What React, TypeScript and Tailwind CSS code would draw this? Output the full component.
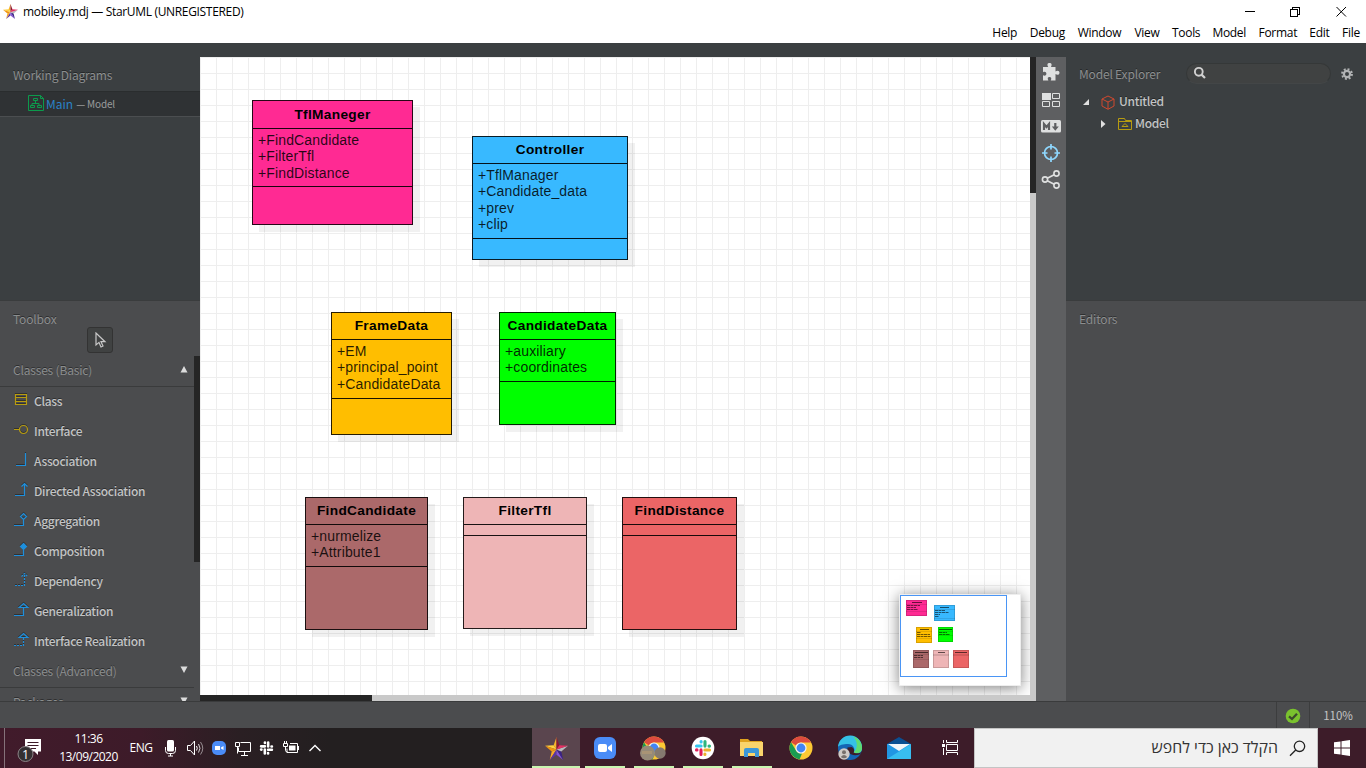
import React from "react";

const SEGOE = "font-['Open_Sans','Noto_Sans',sans-serif]";
const SOURCE = "font-['Noto_Sans_CJK_JP','Noto_Sans',sans-serif]";

function Star({ size }: { size: number }) {
  return (
    <svg width={size} height={size} viewBox="0 0 24 24" className="block shrink-0">
      <path d="M12 0 9 8.500 12 13Z" fill="#f6b52c" />
      <path d="M12 0 15 8.500 12 13Z" fill="#8c1633" />
      <path d="M0 9 9 8.500 12 13Z" fill="#ffd23f" />
      <path d="M0 9 7 15 12 13Z" fill="#f0930f" />
      <path d="M5 24 7 15 12 13Z" fill="#f7a928" />
      <path d="M5 24 12 18.500 12 13Z" fill="#5b35a5" />
      <path d="M19 24 12 18.500 12 13Z" fill="#8453d6" />
      <path d="M19 24 17 15 12 13Z" fill="#3b2385" />
      <path d="M24 9 17 15 12 13Z" fill="#b9b9bd" />
      <path d="M24 9 15 8.500 12 13Z" fill="#e52f62" />
    </svg>
  );
}

const menus = [
  { t: "Help", c: "w-[25px]" },
  { t: "Debug", c: "w-[35px]" },
  { t: "Window", c: "w-[44px]" },
  { t: "View", c: "w-[26px]" },
  { t: "Tools", c: "w-[27px]" },
  { t: "Model", c: "w-[34px]" },
  { t: "Format", c: "w-[38px]" },
  { t: "Edit", c: "w-[20px]" },
  { t: "File", c: "w-[18px]" },
];

function TitleBar() {
  return (
    <header className={`h-[43px] shrink-0 bg-white text-[12px] text-black ${SEGOE}`}>
      <div className="flex h-[23px] items-center pl-[3px]">
        <Star size={15} />
        <span className="ml-[5px] whitespace-nowrap leading-[23px] tracking-[-0.330px]">mobiley.mdj — StarUML (UNREGISTERED)</span>
        <svg className="ml-auto mr-[16px] block" width="105" height="20" viewBox="0 0 105 20" fill="none" stroke="#000" shapeRendering="crispEdges">
          <path d="M0 9.500H10" />
          <path d="M45.500 7.500h7v7h-7zM47.500 7.500v-2h7v7h-2" />
          <path d="M91.500 5 101 14.500M101 5l-9.500 9.500" shapeRendering="auto" />
        </svg>
      </div>
      <nav className="flex h-[20px] justify-end gap-[12.600px] pr-[6px]">
        {menus.map((m) => (
          <span key={m.t} className={`flex justify-center whitespace-nowrap leading-[20px] tracking-[-0.300px] ${m.c}`}>{m.t}</span>
        ))}
      </nav>
    </header>
  );
}

const YELLOW = "#b89c10";
const BLUE = "#1e8fdc";
const tools: { name: string; color: string; icon: React.ReactNode }[] = [
  { name: "Class", color: YELLOW, icon: <path d="M1.500 2.500h11v10h-11zM1.500 5.500h11M1.500 9.500h11" /> },
  { name: "Interface", color: YELLOW, icon: <path d="M0 7.500h5M13.500 7.500a4 4 0 1 1-8 0a4 4 0 1 1 8 0" /> },
  { name: "Association", color: BLUE, icon: <path d="M2 13.500h9.500V1" /> },
  { name: "Directed Association", color: BLUE, icon: <path d="M1 13.500h9.500V1.500M7.500 4.500l3-3 3 3" /> },
  { name: "Aggregation", color: BLUE, icon: <path d="M0 13.500h9.500V7.500M9.500 1.500l3 3-3 3-3-3z" /> },
  { name: "Composition", color: BLUE, icon: <><path d="M0 13.500h9.500V7.500" /><path d="M9.500 1.500l3 3-3 3-3-3z" fill={BLUE} /></> },
  { name: "Dependency", color: BLUE, icon: <><path d="M1 13.500h9.500V2" strokeDasharray="2 1" /><path d="M7.500 4.500l3-3 3 3" strokeDasharray="2 1" /></> },
  { name: "Generalization", color: BLUE, icon: <path d="M0 13.500h9.500V6M9.500 1.500l4.300 4h-8.600z" /> },
  { name: "Interface Realization", color: BLUE, icon: <><path d="M0 13.500h9.500V6" strokeDasharray="2 1" /><path d="M9.500 1.500l4.300 4h-8.600z" /></> },
];

const HEAD = "text-[12px] tracking-[-0.180px] text-[#8c8e8f] [text-shadow:0_-1px_0_rgba(0,0,0,0.4)] whitespace-nowrap";
const ITEM = "text-[12px] tracking-[-0.300px] font-medium text-[#c3c4c5] [text-shadow:0_-1px_0_rgba(0,0,0,0.4)] whitespace-nowrap";

function Group({ title, open }: { title: string; open?: boolean }) {
  return (
    <div className="flex h-[31px] shrink-0 border-b border-[#3a3b3c] pl-[13px] pr-[6px]">
      <span className={`leading-[28px] ${HEAD}`}>{title}</span>
      <svg className="mt-[9px] ml-auto block" width="8" height="8" viewBox="0 0 8 8" fill="#dcdcdc">
        <path d={open ? "M4 1 7.500 7.500H.5z" : "M4 7 7.500 .5H.5z"} />
      </svg>
    </div>
  );
}

function LeftSidebar() {
  return (
    <aside className={`flex w-[200px] shrink-0 flex-col ${SOURCE}`}>
      <section className="h-[243px] shrink-0 bg-[#3b3f41]">
        <h2 className={`h-[34px] pl-[13px] leading-[35px] ${HEAD}`}>Working Diagrams</h2>
        <div className="flex h-[26px] items-center border-y border-t-[#2a2d2e] border-b-[#4b4e50] bg-[#2f3234] pl-[28px]">
          <svg width="16" height="16" viewBox="0 0 16 16" fill="none" stroke="#0c9a4c" className="mb-[2px] block">
            <path d="M.5.5h12l3 3v12H.5zM12.500.5v3h3M5.500 3.500h4v2h-4zM7.500 5.500v3M4 10.500v-2h7v2M2.500 10.500h4v2h-4zM9.500 10.500h4v2h-4z" />
          </svg>
          <span className="ml-[2px] text-[12px] leading-[24px] text-[#2a82c8]">Main</span>
          <span className="ml-[3px] text-[10px] leading-[24px] tracking-[-0.150px] text-[#9a9b9c]">— Model</span>
        </div>
      </section>
      <section className="flex h-[401px] flex-col overflow-hidden border-t border-[#3a3c3d] bg-[#4b4c4e]">
        <h2 className={`h-[26px] pl-[13px] leading-[35px] ${HEAD}`}>Toolbox</h2>
        <div className="flex h-[29px] shrink-0 justify-center">
          <div className="flex h-[26px] w-[26px] items-center justify-center rounded-[3px] border border-[#333] bg-[#404242]">
            <svg width="12" height="17" viewBox="0 0 12 17" fill="none" stroke="#c8c8c8" strokeWidth="1.200" className="mt-px ml-[2px] block">
              <path d="M1 1v12l3-2.600 2 4.600 2-1-2-4.300h4z" />
            </svg>
          </div>
        </div>
        <div className="flex min-h-0 flex-1">
          <div className="flex min-w-0 flex-1 flex-col overflow-hidden">
            <Group title="Classes (Basic)" open />
            {tools.map((t) => (
              <div key={t.name} className="flex h-[30px] shrink-0 pl-[14px]">
                <svg width="15" height="15" viewBox="0 0 15 15" fill="none" stroke={t.color} strokeWidth="1.200" className="mt-[5px] block shrink-0 overflow-visible drop-shadow-[0_-1px_0_rgba(0,0,0,0.35)]">{t.icon}</svg>
                <span className={`ml-[5px] leading-[28px] ${ITEM}`}>{t.name}</span>
              </div>
            ))}
            <Group title="Classes (Advanced)" />
            <Group title="Packages" />
          </div>
          <div className="w-[6px] shrink-0">
            <div className="h-[206px] bg-[#252525]" />
          </div>
        </div>
      </section>
    </aside>
  );
}

type Node = { name: string; pos: string; head: string; mid: string; attrs: string[] };
const TALL = "h-[28px] leading-[27px]";
const SHORT = "h-[27px] leading-[25px]";
const nodes: Node[] = [
  { name: "TflManeger", head: TALL, pos: "left-[52px] top-[43px] w-[161px] h-[125px] bg-[#ff2a93]", mid: "h-[58px]", attrs: ["+FindCandidate", "+FilterTfl", "+FindDistance"] },
  { name: "Controller", head: SHORT, pos: "left-[272px] top-[79px] w-[156px] h-[124px] bg-[#38b9ff]", mid: "h-[75px]", attrs: ["+TflManager", "+Candidate_data", "+prev", "+clip"] },
  { name: "FrameData", head: SHORT, pos: "left-[131px] top-[255px] w-[121px] h-[123px] bg-[#ffbe00]", mid: "h-[59px]", attrs: ["+EM", "+principal_point", "+CandidateData"] },
  { name: "CandidateData", head: SHORT, pos: "left-[299px] top-[255px] w-[117px] h-[113px] bg-[#00ff00]", mid: "h-[42px]", attrs: ["+auxiliary", "+coordinates"] },
  { name: "FindCandidate", head: SHORT, pos: "left-[105px] top-[440px] w-[123px] h-[133px] bg-[#ab696a]", mid: "h-[42px]", attrs: ["+nurmelize", "+Attribute1"] },
  { name: "FilterTfl", head: SHORT, pos: "left-[263px] top-[440px] w-[124px] h-[132px] bg-[#eeb5b6]", mid: "h-[11px]", attrs: [] },
  { name: "FindDistance", head: SHORT, pos: "left-[422px] top-[440px] w-[115px] h-[133px] bg-[#eb6566]", mid: "h-[11px]", attrs: [] },
];

function Canvas() {
  return (
    <main className="relative h-[638px] w-[830px] overflow-hidden bg-white bg-[linear-gradient(to_right,#eeeeee_1px,transparent_1px),linear-gradient(to_bottom,#eeeeee_1px,transparent_1px)] bg-[size:16px_16px] font-['Liberation_Sans',Arial,sans-serif] text-[14px] text-black">
      {nodes.map((n) => (
        <div key={n.name} className={`absolute border border-black/85 shadow-[7px_7px_0_rgba(0,0,0,0.055)] ${n.pos}`}>
          <div className={`border-b border-black/90 text-center text-[13.700px] font-bold tracking-[0.320px] whitespace-nowrap ${n.head}`}>{n.name}</div>
          <div className={`border-b border-black/90 pl-[5px] pt-[3px] tracking-[0.140px] ${n.mid}`}>
            {n.attrs.map((a) => (
              <div key={a} className="h-[16.400px] whitespace-nowrap leading-[16.400px] text-black/85">{a}</div>
            ))}
          </div>
        </div>
      ))}
      <Minimap />
    </main>
  );
}

const mini = [
  { x: 6, y: 5, w: 21, h: 16, c: "#ff2a93", hd: [6, 10], rows: [13, 9, 11], line: 11 },
  { x: 34, y: 10, w: 21, h: 16, c: "#38b9ff", hd: [6, 9], rows: [10, 14, 5, 4], line: 13 },
  { x: 16, y: 32, w: 16, h: 16, c: "#ffbe00", hd: [4, 9], rows: [4, 13, 14], line: 11 },
  { x: 38, y: 32, w: 15, h: 15, c: "#00ff00", hd: [1, 13], rows: [8, 11], line: 8 },
  { x: 13, y: 55, w: 16, h: 18, c: "#ab696a", hd: [2, 13], rows: [9, 9], line: 9 },
  { x: 33, y: 55, w: 16, h: 18, c: "#eeb5b6", hd: [5, 7], rows: [], line: 5 },
  { x: 53, y: 55, w: 16, h: 18, c: "#eb6566", hd: [2, 12], rows: [], line: 5 },
];

function Minimap() {
  return (
    <div className="absolute left-[699px] top-[537px] h-[92px] w-[122px] border border-[#eeeeee] bg-white shadow-[0_2px_14px_rgba(0,0,0,0.5)]">
      <svg width="120" height="90" viewBox="0 0 120 90" className="block">
        {mini.map((m, i) => (
          <g key={i}>
            <rect x={m.x} y={m.y} width={m.w} height={m.h} fill={m.c} />
            <rect x={m.x + 0.5} y={m.y + 0.5} width={m.w - 1} height={m.h - 1} fill="none" stroke="#000" strokeOpacity=".15" />
            <path d={`M${m.x} ${m.y + 4.5}h${m.w}M${m.x} ${m.y + m.line + 0.5}h${m.w}`} stroke="#000" strokeOpacity=".1" />
            <path d={`M${m.x + m.hd[0]} ${m.y + 2.5}h${m.hd[1]}`} stroke="#000" strokeOpacity=".6" />
            {m.rows.map((r, k) => (
              <path key={k} d={`M${m.x + 1} ${m.y + 5.5 + k * 2}h${r}`} stroke="#000" strokeOpacity=".55" strokeDasharray="3 .5" />
            ))}
          </g>
        ))}
        <rect x=".5" y=".5" width="106" height="81" fill="none" stroke="#4a95f5" />
      </svg>
    </div>
  );
}

function ToolStrip() {
  return (
    <div className="flex w-[30px] shrink-0 flex-col items-center bg-[#5e5f61]">
      <svg width="30" height="140" viewBox="0 0 30 140" className="block" fill="#dfe0e0">
        <path d="M7 10h5.200c-1.500-2.600-.6-4 1.300-4s2.900 1.500 1.500 4h4.500v4.500c2-1.500 4-.7 4 1.200s-2 2.800-4 1.300V23.500h-4.800c1.300-2.500.2-3.600-1.300-3.600s-2.300 1.100-1 3.600H7v-5.300c1.900 1 3.400.3 3.400-1.400S8.900 14.200 7 15.200z" />
        <path d="M6 36h9v7H6z" />
        <path d="M16.500 36.500h7v5h-7zM6.500 44.500h7v5h-7zM16.500 44.500h7v5h-7z" fill="none" stroke="#dfe0e0" />
        <rect x="5" y="63" width="20" height="12.500" rx="1.500" />
        <path d="M8 73v-6l2.500 3L13 67v6" fill="none" stroke="#5e5f61" strokeWidth="2.200" />
        <path d="M18.200 66h2.200v3.500h2.400L19.300 73.800 15.800 69.500h2.400z" fill="#5e5f61" />
        <g fill="none" stroke="#8fd8ff" strokeWidth="1.700">
          <circle cx="15" cy="96" r="6.500" />
          <path d="M15 87v5.500M15 99.500v5.500M6 96h5.500M18.500 96H24" />
        </g>
        <g fill="none" stroke="#dfe0e0" strokeWidth="1.600">
          <circle cx="9" cy="122.500" r="2.600" />
          <circle cx="20.500" cy="116.500" r="2.600" />
          <circle cx="20.500" cy="128.500" r="2.600" />
          <path d="M11.300 121.300 18.200 117.700M11.300 123.700 18.200 127.300" />
        </g>
      </svg>
    </div>
  );
}

function RightSidebar() {
  return (
    <aside className={`flex w-[300px] flex-col ${SOURCE}`}>
      <section className="h-[243px] shrink-0 bg-[#3b3f41]">
        <div className="flex h-[34px] items-center pl-[13px]">
          <h2 className={`w-[107px] leading-[34px] ${HEAD}`}>Model Explorer</h2>
          <div className="mb-[1px] h-[21px] w-[145px] rounded-full border border-[#353838] border-b-[#434647] bg-[#404242]">
            <svg width="14" height="14" viewBox="0 0 14 14" fill="none" stroke="#d0d0d0" strokeWidth="1.900" className="ml-[6px] mt-[2px] block">
              <circle cx="5.800" cy="5.800" r="3.900" />
              <path d="M8.600 8.600 12 12" strokeWidth="2.200" />
            </svg>
          </div>
          <svg width="12" height="12" viewBox="0 0 12 12" className="mb-[1px] ml-[10px] block" fill="none" stroke="#b2b4b5">
            <circle cx="6" cy="6" r="3.100" strokeWidth="2.200" />
            <circle cx="6" cy="6" r="4.900" strokeWidth="2" strokeDasharray="1.924 1.924" />
          </svg>
        </div>
        <div className="flex h-[22px] items-center pl-[17px]">
          <svg width="7" height="7" viewBox="0 0 7 7" fill="#e0e0e0" className="mt-[1px] block"><path d="M6 0v6H0z" /></svg>
          <svg width="14" height="15" viewBox="0 0 14 15" fill="none" stroke="#d0492f" className="ml-[11px] block"><path d="M7 1l6 3v7l-6 3.300L1 11V4zM1 4l6 3 6-3M7 7v7" /></svg>
          <span className={`mb-[2px] ml-[4px] leading-[20px] ${ITEM}`}>Untitled</span>
        </div>
        <div className="flex h-[22px] items-center pl-[35px]">
          <svg width="5" height="8" viewBox="0 0 5 8" fill="#e0e0e0" className="block"><path d="M0 0l4.500 4L0 8z" /></svg>
          <svg width="14" height="12" viewBox="0 0 14 12" fill="none" stroke={YELLOW} className="ml-[11.500px] mb-px block"><path d="M.5 11.500V.5h6l1 2h6v9zM.5 3.500h13M4 8.500h6l-3-3z" /></svg>
          <span className={`mb-[2px] ml-[3.500px] leading-[20px] ${ITEM}`}>Model</span>
        </div>
      </section>
      <section className="h-[401px] border-t border-[#3a3c3d] bg-[#4b4c4e]">
        <h2 className={`pl-[13px] leading-[35px] ${HEAD}`}>Editors</h2>
      </section>
    </aside>
  );
}

function StatusBar() {
  return (
    <footer className={`flex h-[27px] shrink-0 justify-end border-t border-[#3a3b3c] bg-[#4b4c4e] ${SOURCE}`}>
      <div className="flex w-[33px] items-center justify-center border-l border-[#3c3d3e]">
        <svg width="16" height="16" viewBox="0 0 16 16" className="mt-[2px] block">
          <circle cx="8" cy="8" r="7.300" fill="#7ac22e" />
          <path d="M4 8.300 7 11 12 5.800" fill="none" stroke="#3c4a2c" strokeWidth="2.300" />
        </svg>
      </div>
      <div className="w-[57px] border-l border-[#3c3d3e] text-center text-[11.500px] leading-[26px] text-[#c3c4c5]">110%</div>
    </footer>
  );
}

function Chrome() {
  return (
    <svg width="24" height="24" viewBox="0 0 24 24" className="block">
      <circle cx="12" cy="12" r="11.500" fill="#fcc934" />
      <path d="M2 6.300A11.500 11.500 0 0 1 22 6.500H12A5.500 5.500 0 0 0 7 9.500z" fill="#dd4b3e" />
      <path d="M2 6.300 7.300 15A5.500 5.500 0 0 0 13 17.400L10.500 23.400A11.500 11.500 0 0 1 2 6.300z" fill="#1a9c52" />
      <circle cx="12" cy="12" r="5.600" fill="#f3f3f3" />
      <circle cx="12" cy="12" r="4.400" fill="#4285f4" />
    </svg>
  );
}

function Slack({ mono }: { mono?: boolean }) {
  const c = mono ? ["#fff", "#fff", "#fff", "#fff"] : ["#36c5f0", "#2eb67d", "#ecb22e", "#e01e5a"];
  return (
    <g strokeWidth="3.100" strokeLinecap="round" fill="none">
      {c.map((k, i) => (
        <g key={i} transform={`rotate(${i * 90} 12 12)`} stroke={k}>
          <path d="M5.500 10h4.600M10.100 5.500v.5" />
        </g>
      ))}
    </g>
  );
}

const apps: { key: string; bar: string; icon: React.ReactNode }[] = [
  { key: "star", bar: "w-[48px] bg-[#c9f5b0]", icon: <Star size={23} /> },
  {
    key: "zoom", bar: "w-[40px] bg-[#c9f5b0]",
    icon: <svg width="24" height="24" viewBox="0 0 24 24" className="block"><rect x="1" y="1" width="22" height="22" rx="6" fill="#4a8cf7" /><rect x="5" y="8" width="9" height="8" rx="2" fill="#fff" /><path d="M15 11l4-3v8l-4-3z" fill="#fff" /></svg>,
  },
  {
    key: "chrome-profile", bar: "w-[40px] bg-[#c9f5b0]",
    icon: (
      <svg width="28" height="26" viewBox="0 0 28 26" className="mr-[2px] block">
        <svg x="3" y="1" width="24" height="24"><Chrome /></svg>
        <circle cx="21" cy="18" r="5.700" fill="#84796f" />
        <circle cx="8.500" cy="18" r="7.500" fill="#968a78" />
        <path d="M3 16h10v3H3z" fill="#b69b73" opacity=".6" />
      </svg>
    ),
  },
  {
    key: "slack", bar: "w-[40px] bg-[#c9f5b0]",
    icon: <svg width="24" height="24" viewBox="0 0 24 24" className="block"><circle cx="12" cy="12" r="11.300" fill="#fff" /><Slack /></svg>,
  },
  {
    key: "files", bar: "w-[40px] bg-[#c9f5b0]",
    icon: <svg width="24" height="24" viewBox="0 0 24 24" className="mr-[2px] block"><path d="M1 3h8l2 2h12v4H1z" fill="#e0a21e" /><path d="M1 6h23v14H1z" fill="#fad46c" /><path d="M5 21v-7q0-2 2-2h11q2 0 2 2v7h-4v-4H9v4z" fill="#3d97d8" /></svg>,
  },
  { key: "chrome", bar: "w-0", icon: <Chrome /> },
  {
    key: "edge", bar: "w-0",
    icon: (
      <svg width="26" height="26" viewBox="0 0 26 26" className="block">
        <circle cx="13" cy="13" r="12" fill="#1565b4" />
        <path d="M1 12A12 12 0 0 1 25 13c0 5-5 6.500-8.500 4.500C19 14 16 9 11 9S2 10 1 12z" fill="#35c1e6" />
        <path d="M16 1.500C22 3 25 8 25 13c0 5-5 6.500-8.500 4.500C21 14 21 6 16 1.500z" fill="#5fdc72" />
        <path d="M10.500 12.500c-1 5 4 9.500 12 7L25 17c-4 2.500-8.500.5-8.500.5 1.500-2 .5-4.500-2-5.500z" fill="#3d1c29" />
        <circle cx="7" cy="19" r="5.700" fill="#cfcac6" />
        <circle cx="7" cy="17.200" r="2" fill="#77706c" /><path d="M3.800 22q3.200-4 6.400 0-3.200 2.400-6.400 0z" fill="#77706c" />
      </svg>
    ),
  },
  {
    key: "mail", bar: "w-0",
    icon: <svg width="24" height="24" viewBox="0 0 24 24" className="block"><path d="M0 8 12 1l12 7z" fill="#0b4f92" /><path d="M0 8h24v15H0z" fill="#2196e3" /><path d="M0 23 24 8v15z" fill="#38bdf0" /><path d="M1 8h22l-11 7z" fill="#f2f5f8" /></svg>,
  },
];

function TaskBar() {
  return (
    <div className={`flex h-[40px] shrink-0 bg-[#3d1c29] text-white ${SEGOE}`}>
      <div className="flex w-[532px] shrink-0 items-center bg-[linear-gradient(to_right,#411b2b_0px,#3d1b29_140px,#2a1f23_240px,#231f20_330px,#231f20_532px)]">
        <div className="ml-[4px] h-full w-px shrink-0 bg-[#85727a]" />
        <svg width="28" height="30" viewBox="0 0 28 30" className="ml-[11px] block shrink-0">
          <path d="M9 6h16v12.500h-3V22l-3.500-3.500H9z" fill="#fff" />
          <path d="M11.500 9.500h11M11.500 12.500h11M14 15.500h6" stroke="#3d1b29" strokeWidth="1.200" />
          <circle cx="9.500" cy="21" r="7.500" fill="#343032" stroke="#8b8487" />
          <text x="9.700" y="25.500" fontSize="12.500" fill="#fff" textAnchor="middle">1</text>
        </svg>
        <div className="ml-[8px] w-[73px] text-center text-[12px] leading-[18px] tracking-[-0.500px]">
          <div>11:36</div>
          <div>13/09/2020</div>
        </div>
        <span className="ml-[4px] w-[24px] text-center text-[12px] tracking-[-0.400px]">ENG</span>
        <svg width="168" height="24" viewBox="0 0 168 24" className="ml-[10px] block shrink-0" fill="none" stroke="#fff">
          <g transform="translate(-163 -8)">
            <rect x="167" y="12" width="7" height="11.500" rx="1.500" fill="#fff" stroke="none" />
            <path d="M165.500 19v3.500q0 3 3 3h4q3 0 3-3V19M170.500 25.500v2.500M168 28h5" />
            <path d="M187.500 17.500h3l4-4.500v14l-4-4.500h-3zM196.500 18q1.500 2.200 0 4.500" />
            <path d="M198.500 16q3 4.300 0 8.500" opacity=".8" /><path d="M200.500 14q4.500 6.300 0 12.500" opacity=".5" />
            <rect x="212" y="13" width="14" height="14" rx="5" fill="#4a8cf7" stroke="none" />
            <path d="M215 18h5v4h-5zM221 19.500l2.500-1.500v4l-2.500-1.500z" fill="#fff" stroke="none" />
            <path d="M240.500 14.500h10v9h-12v-4M244.500 23.500v3.500M241 27.500h7M235.500 14.500h4v4h-4zM237.500 18.500v7" />
            <svg x="256.500" y="10" width="20" height="20" viewBox="0 0 24 24"><Slack mono /></svg>
            <path d="M290 15.500h7.500v9H287v-4M298.500 18v4" /><path d="M289 17.500h6.500v5H289z" fill="#fff" stroke="none" />
            <path d="M283.500 15.500h4v3h-4zM284.500 13v2M286.500 13v2M285.500 18.500v4q0 1.500 2 1.500" />
            <path d="M309.500 23 315 17.500 320.500 23" strokeWidth="1.400" />
          </g>
        </svg>
      </div>
      <div className="flex w-[392px] shrink-0 gap-px">
        {apps.map((a) => (
          <div key={a.key} className={`flex w-[48px] shrink-0 flex-col items-center ${a.key === "star" ? "bg-[#5a454e]" : ""}`}>
            <div className="flex h-[38px] items-center pt-[2px]">{a.icon}</div>
            <div className={`h-[2px] ${a.bar}`} />
          </div>
        ))}
      </div>
      <div className="flex w-[50px] shrink-0 items-center justify-center">
        <svg width="18" height="18" viewBox="0 0 18 18" className="ml-[2px] block" fill="none" stroke="#fff">
          <path d="M5.500 5.500h11v6h-11zM5.500 1v2.500h11V1M5.500 16v-2.500h11V16M2.500 1v3M2.500 9v7" /><path d="M1 5h3v3H1z" fill="#fff" stroke="none" />
        </svg>
      </div>
      <div dir="rtl" className="flex w-[344px] shrink-0 items-center border border-[#c4c4c4] bg-[#f1f1f1] pr-[11px] text-[#333]">
        <svg width="17" height="17" viewBox="0 0 17 17" fill="none" stroke="#222" strokeWidth="1.300" className="block"><circle cx="10.500" cy="6.300" r="5.200" /><path d="M6.700 10 1 15.800" /></svg>
        <span className="mr-[11px] whitespace-nowrap text-[15.900px]">הקלד כאן כדי לחפש</span>
      </div>
      <div className="flex flex-1 items-center justify-center">
        <svg width="16" height="16" viewBox="0 0 16 16" fill="#fff" className="block"><path d="M0 2.300 6.500 1.400v6.100H0zM7.500 1.200 16 0v7.500H7.500zM0 8.500h6.500v6.100L0 13.700zM7.500 8.500H16V16L7.500 14.800z" /></svg>
      </div>
    </div>
  );
}

export default function App() {
  return (
    <div className="flex h-[768px] w-[1366px] flex-col overflow-hidden">
      <TitleBar />
      <div className="h-[14px] shrink-0 bg-[#3b3f41]" />
      <div className="flex h-[644px] shrink-0">
        <LeftSidebar />
        <div className="flex w-[836px] shrink-0 flex-col">
          <div className="flex">
            <Canvas />
            <div className="w-[6px] bg-[#c9c9c9]"><div className="h-[136px] bg-[#252525]" /></div>
          </div>
          <div className="h-[6px] bg-[#c9c9c9]"><div className="h-full w-[172px] bg-[#252525]" /></div>
        </div>
        <ToolStrip />
        <RightSidebar />
      </div>
      <StatusBar />
      <TaskBar />
    </div>
  );
}
